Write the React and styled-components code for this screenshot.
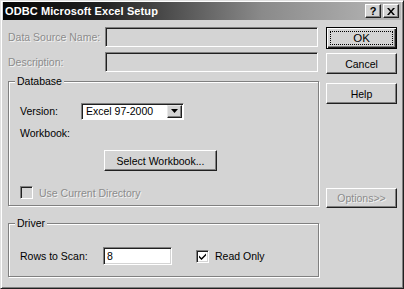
import React from "react";
import styled, { createGlobalStyle } from "styled-components";

const GlobalStyle = createGlobalStyle`
  * { box-sizing: border-box; }
  body {
    margin: 0;
    background: #d4d4d4;
    font-family: "Liberation Sans", Arial, sans-serif;
    font-size: 10.5px;
    color: #000;
  }
`;

// Window frame
const Window = styled.div`
  width: 404px;
  height: 289px;
  background: #d4d4d4;
  border: 1px solid;
  border-color: #e0e0e0 #202020 #202020 #e0e0e0;
  box-shadow: inset 1px 1px #fff, inset -1px -1px #808080;
  padding: 1px 2px;
  display: flex;
  flex-direction: column;
`;

const TitleBar = styled.div`
  height: 18px;
  display: flex;
  align-items: center;
  padding: 0 2px 0 2px;
  background: linear-gradient(to right, #050505, #222 25%, #8a8a8a 65%, #b8b8b8);
`;

const Title = styled.div`
  flex: 1;
  color: #fff;
  font-weight: bold;
  font-size: 11px;
  letter-spacing: 0.1px;
`;

const CaptionButton = styled.div`
  width: 16px;
  height: 14px;
  margin-left: ${(p) => (p.$gap ? "2px" : "0")};
  background: #d4d4d4;
  border: 1px solid;
  border-color: #fff #202020 #202020 #fff;
  box-shadow: inset -1px -1px #808080;
  display: flex;
  align-items: center;
  justify-content: center;
  font-weight: bold;
  font-size: 11px;
  line-height: 1;
`;

const Body = styled.div`
  flex: 1;
  display: flex;
  gap: 7px;
  padding: 7px 0 0 5px;
`;

const LeftColumn = styled.div`
  width: 311px;
  display: flex;
  flex-direction: column;
`;

const RightColumn = styled.div`
  width: 71px;
  display: flex;
  flex-direction: column;
`;

const FieldRow = styled.div`
  display: flex;
  align-items: center;
  height: 20px;
  margin-bottom: ${(p) => p.$mb || 0}px;
`;

const Label = styled.span`
  width: ${(p) => p.$w}px;
  flex-shrink: 0;
  white-space: nowrap;
  color: ${(p) => (p.$disabled ? "#8c8c8c" : "#000")};
  text-shadow: ${(p) => (p.$disabled ? "1px 1px #f2f2f2" : "none")};
`;

const TextBox = styled.div`
  width: ${(p) => p.$w}px;
  height: ${(p) => p.$h}px;
  background: ${(p) => (p.$disabled ? "#d4d4d4" : "#fff")};
  border: 1px solid;
  border-color: #808080 #fff #fff #808080;
  box-shadow: inset 1px 1px #202020, inset -1px -1px #d4d4d4;
  padding: 0 3px;
  display: flex;
  align-items: center;
`;

const Group = styled.div`
  position: relative;
  height: ${(p) => p.$h}px;
  margin-top: ${(p) => p.$mt}px;
  border: 1px solid #808080;
  box-shadow: inset 1px 1px #fff, 1px 1px #fff;
  padding: ${(p) => p.$pt}px 0 0 11px;
  display: flex;
  flex-direction: column;
  align-items: flex-start;
`;

const GroupTitle = styled.span`
  position: absolute;
  top: -7px;
  left: 6px;
  padding: 0 2px;
  background: #d4d4d4;
  line-height: 13px;
`;

const Select = styled.div`
  width: 103px;
  height: 17px;
  background: #fff;
  border: 1px solid;
  border-color: #808080 #fff #fff #808080;
  box-shadow: inset 1px 1px #202020;
  display: flex;
  align-items: center;
  padding: 1px 1px 1px 4px;
`;

const SelectValue = styled.span`
  flex: 1;
`;

const DropButton = styled.div`
  width: 15px;
  height: 13px;
  background: #d4d4d4;
  border: 1px solid;
  border-color: #e8e8e8 #202020 #202020 #e8e8e8;
  box-shadow: inset -1px -1px #808080;
  display: flex;
  align-items: center;
  justify-content: center;
`;

const Button = styled.div`
  width: ${(p) => p.$w || 71}px;
  height: ${(p) => p.$h || 21}px;
  margin-top: ${(p) => p.$mt || 0}px;
  margin-left: ${(p) => p.$ml || 0}px;
  background: #d4d4d4;
  border: 1px solid;
  border-color: ${(p) => (p.$default ? "#000" : "#fff #202020 #202020 #fff")};
  box-shadow: ${(p) =>
    p.$default
      ? "inset 1px 1px #fff, inset -1px -1px #202020, inset -2px -2px #808080"
      : "inset -1px -1px #808080"};
  display: flex;
  align-items: center;
  justify-content: center;
  position: relative;
  color: ${(p) => (p.$disabled ? "#8c8c8c" : "#000")};
  text-shadow: ${(p) => (p.$disabled ? "1px 1px #f2f2f2" : "none")};
  font-size: ${(p) => (p.$big ? "11.5px" : "10.5px")};
`;

const FocusRing = styled.span`
  position: absolute;
  inset: 3px;
  border: 1px dotted #000;
`;

const CheckRow = styled.div`
  display: flex;
  align-items: center;
  margin-top: ${(p) => p.$mt || 0}px;
  margin-left: ${(p) => p.$ml || 0}px;
`;

const CheckBox = styled.div`
  width: 13px;
  height: 13px;
  background: ${(p) => (p.$disabled ? "#d4d4d4" : "#fff")};
  border: 1px solid;
  border-color: #808080 #fff #fff #808080;
  box-shadow: inset 1px 1px #202020, inset -1px -1px #d4d4d4;
  margin-right: 6px;
  display: flex;
  align-items: center;
  justify-content: center;
`;

const PlainLine = styled.div`
  height: 13px;
  margin-top: ${(p) => p.$mt}px;
  display: flex;
  align-items: center;
`;

export default function App() {
  return (
    <>
      <GlobalStyle />
      <Window>
        <TitleBar>
          <Title>ODBC Microsoft Excel Setup</Title>
          <CaptionButton>?</CaptionButton>
          <CaptionButton $gap>
            <svg width="8" height="7" viewBox="0 0 8 7">
              <path d="M0 0h2l2 2.5L6 0h2L5 3.5 8 7H6L4 4.5 2 7H0l3-3.5z" fill="#000" />
            </svg>
          </CaptionButton>
        </TitleBar>
        <Body>
          <LeftColumn>
            <FieldRow $mb={5}>
              <Label $w={97} $disabled>Data Source Name:</Label>
              <TextBox $w={213} $h={20} $disabled />
            </FieldRow>
            <FieldRow>
              <Label $w={97} $disabled>Description:</Label>
              <TextBox $w={213} $h={20} $disabled />
            </FieldRow>

            <Group $h={125} $mt={9} $pt={19}>
              <GroupTitle>Database</GroupTitle>
              <FieldRow>
                <Label $w={61}>Version:</Label>
                <Select>
                  <SelectValue>Excel 97-2000</SelectValue>
                  <DropButton>
                    <svg width="7" height="4" viewBox="0 0 7 4">
                      <path d="M0 0h7L3.5 4z" fill="#000" />
                    </svg>
                  </DropButton>
                </Select>
              </FieldRow>
              <PlainLine $mt={5}>Workbook:</PlainLine>
              <Button $w={113} $mt={11} $ml={84}>Select Workbook...</Button>
              <CheckRow $mt={15}>
                <CheckBox $disabled />
                <Label $disabled>Use Current Directory</Label>
              </CheckRow>
            </Group>

            <Group $h={54} $mt={17} $pt={22}>
              <GroupTitle>Driver</GroupTitle>
              <FieldRow>
                <Label $w={83}>Rows to Scan:</Label>
                <TextBox $w={69} $h={18}>8</TextBox>
                <CheckRow $ml={24}>
                  <CheckBox>
                    <svg width="7" height="7" viewBox="0 0 7 7">
                      <path d="M0 2.5l2.5 2.5L7 0.5v2L2.5 7 0 4.5z" fill="#000" />
                    </svg>
                  </CheckBox>
                  <span>Read Only</span>
                </CheckRow>
              </FieldRow>
            </Group>
          </LeftColumn>

          <RightColumn>
            <Button $default $h={22} $big>
              <FocusRing />
              OK
            </Button>
            <Button $mt={4}>Cancel</Button>
            <Button $mt={9}>Help</Button>
            <Button $mt={84} $h={20} $disabled>Options&gt;&gt;</Button>
          </RightColumn>
        </Body>
      </Window>
    </>
  );
}
